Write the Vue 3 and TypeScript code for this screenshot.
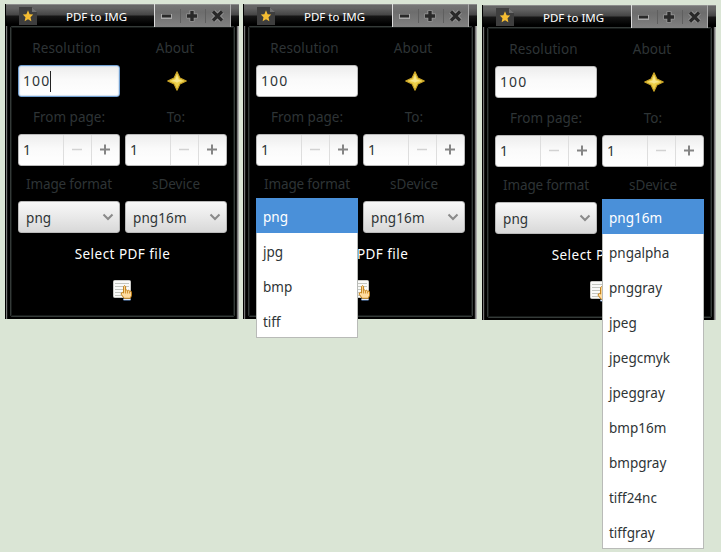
<script setup lang="ts">
interface ConverterWindow {
  id: number
  resolution: string
  focused: boolean
  openMenu: 'format' | 'device' | null
}

const formats: string[] = ['png', 'jpg', 'bmp', 'tiff']
const devices: string[] = [
  'png16m', 'pngalpha', 'pnggray', 'jpeg', 'jpegcmyk',
  'jpeggray', 'bmp16m', 'bmpgray', 'tiff24nc', 'tiffgray',
]

const windows: ConverterWindow[] = [
  { id: 1, resolution: '100', focused: true, openMenu: null },
  { id: 2, resolution: '100', focused: false, openMenu: 'format' },
  { id: 3, resolution: '100', focused: false, openMenu: 'device' },
]
</script>

<template>
  <main class="desktop">
    <section v-for="w in windows" :key="w.id" class="window">
      <header class="titlebar">
        <svg class="app-icon" width="18" height="18" viewBox="0 0 18 18">
          <path d="M0 0H13L18 5V18H0Z" fill="#3e3e3e" />
          <path d="M13 0V5H18Z" fill="#707070" />
          <path d="M9 3.3L10.6 7.2L14.2 7.5L11.5 10.2L12.4 14.2L9 12.2L5.6 14.2L6.5 10.2L3.8 7.5L7.4 7.2Z" fill="#f5bd32" />
        </svg>
        <h1 class="title">PDF to IMG</h1>
        <div class="controls">
          <svg class="control" width="25" height="24" viewBox="0 0 25 24">
            <path d="M6 12.5H17" stroke="#aaa" stroke-width="5" />
            <path d="M7 12H16" stroke="#292929" stroke-width="3" />
          </svg>
          <svg class="control" width="25" height="24" viewBox="0 0 25 24">
            <path d="M12 6.5V17.5M6.5 12H17.5" stroke="#9b9b9b" stroke-width="5" />
            <path d="M12 7V17M7 12H17" stroke="#292929" stroke-width="3.4" />
          </svg>
          <svg class="control" width="25" height="24" viewBox="0 0 25 24">
            <path d="M8 7.5L17 16.5M17 7.5L8 16.5" stroke="#9b9b9b" stroke-width="5" />
            <path d="M8 7.5L17 16.5M17 7.5L8 16.5" stroke="#292929" stroke-width="3.2" />
          </svg>
        </div>
      </header>

      <div class="content">
        <div class="form">
          <span class="label resolution">Resolution</span>
          <span class="label about">About</span>

          <div class="entry" :class="{ focused: w.focused }">
            <span class="number">{{ w.resolution }}</span><i v-if="w.focused" class="caret"></i>
          </div>
          <div class="about-button">
            <svg width="20" height="20" viewBox="0 0 20 20">
              <path d="M10 .7L12.9 7.1L19.3 10L12.9 12.9L10 19.3L7.1 12.9L.7 10L7.1 7.1Z" fill="#ecd04a" stroke="#c9a325" stroke-width="1.1" stroke-linejoin="round" />
              <path d="M10 3.5L11.6 8.4L16 10L11.6 10.8L10 11.8L8.4 10.8L4 10L8.4 8.4Z" fill="#f8e78c" />
            </svg>
          </div>

          <span class="label pages">From page:</span>
          <span class="label pages">To:</span>

          <div v-for="n in 2" :key="n" class="spin">
            <span class="number">1</span>
            <span class="step">
              <svg width="12" height="12" viewBox="0 0 12 12"><path d="M1 5.5H11" stroke="#d2d2d2" stroke-width="1.5" /></svg>
            </span>
            <span class="step">
              <svg width="12" height="12" viewBox="0 0 12 12"><path d="M1 5.5H11M6 .5V10.5" stroke="#858585" stroke-width="2" /></svg>
            </span>
          </div>

          <span class="label kinds format">Image format</span>
          <span class="label kinds">sDevice</span>

          <div class="combo">
            <span class="choice">png</span>
            <svg width="12" height="8" viewBox="0 0 12 8"><path d="M1.5 1.5L6 6L10.5 1.5" fill="none" stroke="#8a8a8a" stroke-width="2" /></svg>
            <ul v-if="w.openMenu === 'format'" class="menu">
              <li v-for="(f, i) in formats" :key="f" :class="{ active: i === 0 }">{{ f }}</li>
            </ul>
          </div>
          <div class="combo">
            <span class="choice">png16m</span>
            <svg width="12" height="8" viewBox="0 0 12 8"><path d="M1.5 1.5L6 6L10.5 1.5" fill="none" stroke="#8a8a8a" stroke-width="2" /></svg>
            <ul v-if="w.openMenu === 'device'" class="menu">
              <li v-for="(d, i) in devices" :key="d" :class="{ active: i === 0 }">{{ d }}</li>
            </ul>
          </div>
        </div>

        <p class="select">Select PDF file</p>
        <svg class="pick" width="20" height="21" viewBox="0 0 20 21">
          <rect x=".5" y=".5" width="17" height="17" rx="1" fill="#fafaf8" stroke="#c9c9c5" />
          <path d="M2 3.5H16M2 6.5H16M2 9.5H11M2 12.5H9M2 15.5H9" stroke="#c3c6c0" />
          <path d="M10.5 17.5H17.5V20.5H10.5Z" fill="#6f9ddd" />
          <path d="M10.5 19.5H17.5" stroke="#dfeaff" />
          <path d="M10.6 13V6.5Q11.6 4.8 12.6 6.5V10.5Q13.8 9.3 14.6 10.7Q15.8 9.7 16.6 11.1Q18.5 10.6 18.5 12.5V15.5L17.3 18.3H11.2L8.2 14.3Q8 12.6 9.3 12.4Z" fill="#ffdca0" stroke="#c17d11" />
          <path d="M12.6 10.5V13.5M14.6 11V13.5M16.6 11.5V13.5" stroke="#c17d11" stroke-width=".8" />
        </svg>
      </div>
    </section>
  </main>
</template>

<style>
body {
  margin: 0;
  overflow: hidden;
  background: #dae5d5;
}
</style>

<style scoped>
.desktop {
  box-sizing: border-box;
  width: 721px;
  height: 552px;
  padding: 4px 5px;
  display: flex;
  align-items: flex-start;
  gap: 4px;
  font-family: "Noto Sans", "Open Sans", sans-serif;
  font-size: 13.5px;
  color: #2e3436;
  background: #dae5d5;
}
.window {
  box-sizing: border-box;
  flex: none;
  width: 234px;
  height: 315px;
  padding: 0 4px 2px 5px;
  background: linear-gradient(90deg, #000 0 1px, #777 1px 2px, #151515 2px 3px, #000 3px 231px, #151515 231px 232px, #777 232px 233px, #aaa 233px 234px);
}
.window:last-child {
  margin: 1px 0 0 1px;
}
.titlebar {
  display: flex;
  align-items: flex-start;
  height: 22px;
  margin: 0 -4px;
  background: linear-gradient(#b0b0b0 0, #666 1px, #646464 4px, #454545 11px, #171717 12px, #000 20px);
}
.app-icon {
  margin: 3px 0 0 13px;
}
.title {
  flex: 1;
  margin: 4px 0 0 29px;
  font-size: 11.5px;
  font-weight: 400;
  line-height: 18px;
  color: #fff;
  white-space: nowrap;
}
.controls {
  display: flex;
  box-sizing: border-box;
  height: 24px;
  margin-right: 8px;
  border-left: 1px solid #ddd;
  border-right: 1px solid #aaa;
  background: linear-gradient(#aaa 0, #777 1px, #6d6d6d 8px, #818181 23px, #999 24px);
}
.control + .control {
  background: linear-gradient(90deg, #5f5f5f 1px, transparent 1px);
  background-size: 100% 14px;
  background-position: 0 5px;
  background-repeat: no-repeat;
}
.content {
  box-sizing: border-box;
  height: 291px;
  padding: 12px 7px 0;
  border: 1px solid #343a38;
  border-radius: 2px;
  outline: 1px solid #161a19;
  outline-offset: -2px;
}
.form {
  display: grid;
  grid-template-columns: 102px 102px;
  grid-template-rows: 26px 32px 37px 32px 35px 32px;
  column-gap: 5px;
  width: 209px;
}
.label {
  line-height: 20px;
  text-align: center;
  color: #2e3436;
  white-space: nowrap;
}
.label.resolution,
.label.about {
  line-height: 18px;
}
.label.resolution {
  margin-right: 5px;
  letter-spacing: 0.1px;
}
.label.about {
  margin-right: 2px;
}
.label.pages {
  padding-top: 10px;
}
.label.kinds {
  padding-top: 8px;
}
.label.format {
  letter-spacing: -0.15px;
}
.entry,
.spin {
  box-sizing: border-box;
  display: flex;
  align-items: center;
  border: 1px solid #b9b9b9;
  border-radius: 3px;
  background: linear-gradient(#ededed, #fafafa 45%, #fff);
}
.entry {
  padding-left: 4px;
}
.entry.focused {
  border: 1px solid #729fcf;
  box-shadow: inset 0 0 1px 1px #d4e1f0;
}
.number {
  font-size: 14px;
  line-height: 20px;
  letter-spacing: 1.1px;
}
.caret {
  width: 1px;
  height: 21px;
  background: #222;
}
.about-button {
  display: flex;
  align-items: center;
  justify-content: center;
  padding-left: 1px;
}
.spin .number {
  flex: 1;
  padding-left: 4px;
}
.step {
  box-sizing: border-box;
  display: flex;
  align-items: center;
  justify-content: center;
  width: 28px;
  height: 30px;
  padding-right: 2px;
  border-left: 1px solid #dedede;
}
.combo {
  position: relative;
  box-sizing: border-box;
  display: flex;
  align-items: center;
  justify-content: space-between;
  padding: 0 5px 0 7px;
  border: 1px solid #b9b9b9;
  border-radius: 3px;
  background: linear-gradient(#f8f8f8, #e9e9e9 50%, #d8d8d8);
}
.choice {
  padding-top: 1px;
  line-height: 20px;
  letter-spacing: 0.1px;
}
.menu {
  position: absolute;
  z-index: 2;
  top: -4px;
  left: -1px;
  box-sizing: border-box;
  width: 102px;
  margin: 0;
  padding: 0;
  list-style: none;
  background: #fff;
  box-shadow: inset 0 0 0 1px #b9bbb8;
}
.menu li {
  box-sizing: border-box;
  height: 35px;
  padding: 2px 7px 0;
  line-height: 34px;
}
.menu li.active {
  color: #fff;
  background: #4a90d9;
}
.select {
  margin: 11px 0 0;
  line-height: 20px;
  letter-spacing: 0.46px;
  text-align: center;
  color: #fff;
}
.pick {
  display: block;
  margin: 16px auto 0;
}
</style>
